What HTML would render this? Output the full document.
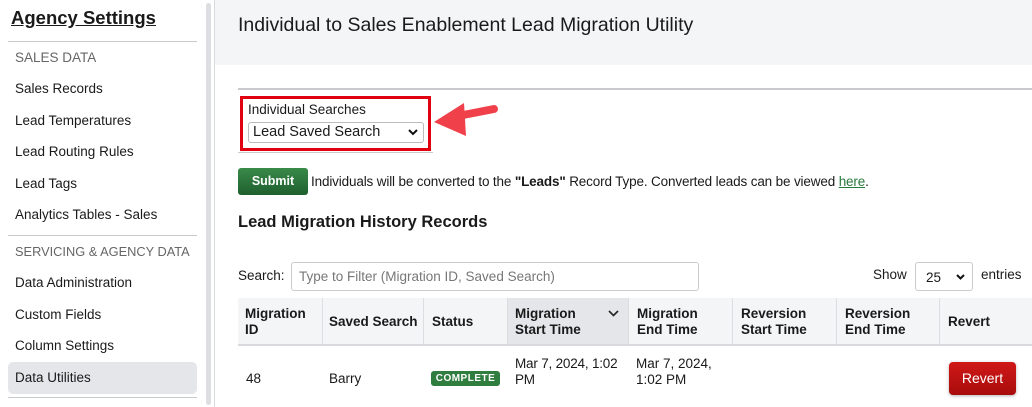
<!DOCTYPE html>
<html><head><style>
*{box-sizing:border-box;margin:0;padding:0}
body{width:1032px;height:407px;overflow:hidden;background:#fff;font-family:"Liberation Sans",sans-serif;color:#1a1a1a;position:relative}
.a{position:absolute;white-space:nowrap}
.side{font-size:13.5px}
.hr{position:absolute;height:1px;background:#c8cacd}
</style></head><body>
<div class="a" style="left:11px;top:7px;font-size:18.5px;font-weight:bold;text-decoration:underline">Agency Settings</div>
<div class="hr" style="left:8px;top:41px;width:189px"></div>
<div class="a side" style="left:15px;top:50px;color:#666">SALES DATA</div>
<div class="a side" style="left:15px;top:81px">Sales Records</div>
<div class="a side" style="left:15px;top:113px">Lead Temperatures</div>
<div class="a side" style="left:15px;top:144px">Lead Routing Rules</div>
<div class="a side" style="left:15px;top:176px">Lead Tags</div>
<div class="a side" style="left:15px;top:207px">Analytics Tables - Sales</div>
<div class="hr" style="left:8px;top:235px;width:189px"></div>
<div class="a side" style="left:15px;top:244px;color:#666;font-size:12.8px">SERVICING &amp; AGENCY DATA</div>
<div class="a side" style="left:15px;top:275px">Data Administration</div>
<div class="a side" style="left:15px;top:307px">Custom Fields</div>
<div class="a side" style="left:15px;top:338px">Column Settings</div>
<div class="a" style="left:8px;top:362px;width:189px;height:32px;background:#e4e6e9;border-radius:5px"></div>
<div class="a side" style="left:15px;top:370px">Data Utilities</div>
<div class="hr" style="left:8px;top:397px;width:189px"></div>
<div class="a" style="left:206px;top:3px;width:5px;height:402px;background:#dcdee2;border-radius:3px"></div>
<div class="a" style="left:214px;top:0;width:1px;height:407px;background:#d8dadd"></div>
<div class="a" style="left:215px;top:0;width:817px;height:65px;background:#f4f5f7"></div>
<div class="a" style="left:238px;top:14px;font-size:19.5px">Individual to Sales Enablement Lead Migration Utility</div>
<div class="hr" style="left:238px;top:88px;width:794px;height:2px"></div>
<div class="a" style="left:240px;top:96px;width:191px;height:55px;border:3px solid #e00010"></div>
<div class="a" style="left:248px;top:102px;font-size:13.5px">Individual Searches</div>
<div class="a" style="left:248px;top:122px;width:176px;height:21px;border:1px solid #bbb;border-radius:3px;font-size:14.5px;padding:1px 0 0 4px;background:#fff">Lead Saved Search<svg style="position:absolute;right:5px;top:6px" width="10" height="7"><path d="M1 1 L5 5 L9 1" stroke="#111" stroke-width="2" fill="none"/></svg></div>
<div class="hr" style="left:238px;top:152px;width:195px"></div>
<svg class="a" style="left:428px;top:100px" width="72" height="40"><path d="M66 9 L30 16" stroke="#f0404a" stroke-width="8" stroke-linecap="round"/><path d="M6 22 L36 3 L38 36 Z" fill="#f0404a"/></svg>
<div class="a" style="left:238px;top:168px;width:70px;height:27px;background:linear-gradient(#3a8a4a,#1f5f2e);border-radius:3px;color:#fff;font-size:12.5px;font-weight:bold;text-align:center;line-height:27px">Submit</div>
<div class="a" style="left:311px;top:174px;font-size:13.5px;letter-spacing:-0.15px">Individuals will be converted to the <b>"Leads"</b> Record Type. Converted leads can be viewed <span style="color:#2a7a3a;text-decoration:underline">here</span>.</div>
<div class="a" style="left:238px;top:213px;font-size:16.5px;font-weight:bold">Lead Migration History Records</div>
<div class="a" style="left:238px;top:268px;font-size:13.5px">Search:</div>
<div class="a" style="left:291px;top:262px;width:408px;height:29px;border:1px solid #ccc;border-radius:3px;font-size:13.5px;color:#777;padding:6px 7px">Type to Filter (Migration ID, Saved Search)</div>
<div class="a" style="left:873px;top:267px;font-size:13.5px">Show</div>
<div class="a" style="left:915px;top:262px;width:58px;height:29px;border:1px solid #ccc;border-radius:3px;font-size:13.5px;padding:7px 10px">25<svg style="position:absolute;right:7px;top:11px" width="9" height="6"><path d="M1 1 L4.5 4.5 L8 1" stroke="#111" stroke-width="2" fill="none"/></svg></div>
<div class="a" style="left:981px;top:267px;font-size:13.5px">entries</div>
<div class="a" style="left:238px;top:298px;width:794px;height:48px;background:#f4f5f7;border-bottom:2px solid #d8dadd"></div>
<div class="a" style="left:507px;top:298px;width:121px;height:48px;background:#e4e6e9;border-bottom:2px solid #d8dadd"></div>
<div class="a" style="left:238px;top:298px;width:794px;height:48px;font-size:13.5px;font-weight:bold;line-height:16px">
<div class="a" style="left:84px;top:0;width:1px;height:46px;background:#dcdee2"></div>
<div class="a" style="left:185px;top:0;width:1px;height:46px;background:#dcdee2"></div>
<div class="a" style="left:269px;top:0;width:1px;height:46px;background:#dcdee2"></div>
<div class="a" style="left:390px;top:0;width:1px;height:46px;background:#dcdee2"></div>
<div class="a" style="left:494px;top:0;width:1px;height:46px;background:#dcdee2"></div>
<div class="a" style="left:598px;top:0;width:1px;height:46px;background:#dcdee2"></div>
<div class="a" style="left:701px;top:0;width:1px;height:46px;background:#dcdee2"></div>
<div class="a" style="left:7px;top:8px">Migration<br>ID</div>
<div class="a" style="left:91px;top:16px">Saved Search</div>
<div class="a" style="left:194px;top:16px">Status</div>
<div class="a" style="left:277px;top:8px">Migration<br>Start Time</div>
<svg class="a" style="left:370px;top:12px" width="11" height="7"><path d="M1 1 L5.5 5.5 L10 1" stroke="#222" stroke-width="1.6" fill="none"/></svg>
<div class="a" style="left:399px;top:8px">Migration<br>End Time</div>
<div class="a" style="left:503px;top:8px">Reversion<br>Start Time</div>
<div class="a" style="left:607px;top:8px">Reversion<br>End Time</div>
<div class="a" style="left:710px;top:16px">Revert</div>
</div>
<div class="a" style="left:246px;top:371px;font-size:13.5px">48</div>
<div class="a" style="left:329px;top:371px;font-size:13.5px">Barry</div>
<div class="a" style="left:431px;top:371px;width:69px;height:15px;background:#2f7d3f;border-radius:3px;color:#fff;font-size:10px;font-weight:bold;text-align:center;line-height:15px;letter-spacing:.5px">COMPLETE</div>
<div class="a" style="left:515px;top:356px;font-size:13.5px;line-height:16px;letter-spacing:-0.2px">Mar 7, 2024, 1:02<br>PM</div>
<div class="a" style="left:636px;top:356px;font-size:13.5px;line-height:16px">Mar 7, 2024,<br>1:02 PM</div>
<div class="a" style="left:949px;top:362px;width:67px;height:33px;background:linear-gradient(#d01818,#a80c0c);border-radius:4px;color:#fff;font-size:14px;text-align:center;line-height:33px;box-shadow:0 1px 3px rgba(0,0,0,.3)">Revert</div>
</body></html>
